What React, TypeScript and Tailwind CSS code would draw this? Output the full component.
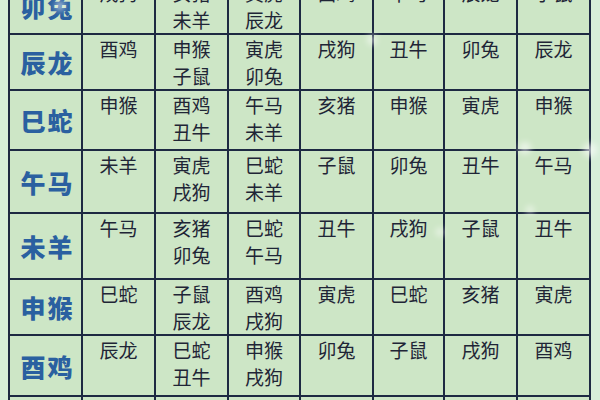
import React from "react";

type Row = {
  name: string;
  h: number;
  cells: string[][];
};

const rows: Row[] = [
  {
    name: "卯兔",
    h: 56,
    cells: [["戌狗"], ["亥猪", "未羊"], ["寅虎", "辰龙"], ["酉鸡"], ["午马"], ["辰龙"], ["子鼠"]],
  },
  {
    name: "辰龙",
    h: 55,
    cells: [["酉鸡"], ["申猴", "子鼠"], ["寅虎", "卯兔"], ["戌狗"], ["丑牛"], ["卯兔"], ["辰龙"]],
  },
  {
    name: "巳蛇",
    h: 60,
    cells: [["申猴"], ["酉鸡", "丑牛"], ["午马", "未羊"], ["亥猪"], ["申猴"], ["寅虎"], ["申猴"]],
  },
  {
    name: "午马",
    h: 63,
    cells: [["未羊"], ["寅虎", "戌狗"], ["巳蛇", "未羊"], ["子鼠"], ["卯兔"], ["丑牛"], ["午马"]],
  },
  {
    name: "未羊",
    h: 66,
    cells: [["午马"], ["亥猪", "卯兔"], ["巳蛇", "午马"], ["丑牛"], ["戌狗"], ["子鼠"], ["丑牛"]],
  },
  {
    name: "申猴",
    h: 56,
    cells: [["巳蛇"], ["子鼠", "辰龙"], ["酉鸡", "戌狗"], ["寅虎"], ["巳蛇"], ["亥猪"], ["寅虎"]],
  },
  {
    name: "酉鸡",
    h: 61,
    cells: [["辰龙"], ["巳蛇", "丑牛"], ["申猴", "戌狗"], ["卯兔"], ["子鼠"], ["戌狗"], ["酉鸡"]],
  },
  {
    name: "戌狗",
    h: 60,
    cells: [["卯兔"], ["寅虎", "午马"], ["申猴", "酉鸡"], ["辰龙"], ["未羊"], ["酉鸡"], ["未羊"]],
  },
];

const widths = [73, 73, 73, 72, 73, 71, 73, 73];

const sparkles = [
  { x: 372, y: 40, s: 10 },
  { x: 525, y: 148, s: 12 },
  { x: 590, y: 150, s: 14 },
  { x: 60, y: 6, s: 10 },
  { x: 530, y: 210, s: 8 },
  { x: 440, y: 232, s: 8 },
];

const App = () => {
  return (
    <div
      className="relative w-[600px] h-[400px] overflow-hidden bg-[#d6eed8]"
      style={{ fontFamily: '"Noto Sans CJK SC", "Noto Sans", sans-serif' }}
    >
      <div className="-mt-[23px] ml-[8px]">
        <table className="table-fixed border-collapse bg-[#cde6c6]">
          <colgroup>
            {widths.map((w, i) => (
              <col key={i} style={{ width: w }} />
            ))}
          </colgroup>
          <tbody>
            {rows.map((row) => (
              <tr key={row.name} style={{ height: row.h }}>
                {/* zodiac name column */}
                <td className="border-2 border-[#1d2942] text-center align-middle p-0 pt-1 pl-1">
                  <span className="text-[25px] font-black leading-none text-[#2a60a0] tracking-[2px]">
                    {row.name}
                  </span>
                </td>
                {row.cells.map((lines, i) => (
                  <td
                    key={i}
                    className="border-2 border-[#1d2942] text-center align-top p-0"
                  >
                    {lines.map((t, j) => (
                      <div key={j} className="text-[19px] leading-[27px] text-[#1f2536]">
                        {t}
                      </div>
                    ))}
                  </td>
                ))}
              </tr>
            ))}
          </tbody>
        </table>
      </div>

      {/* soft glints on the photo */}
      {sparkles.map((p, i) => (
        <div
          key={i}
          className="absolute rounded-full bg-white/60 blur-[3px]"
          style={{ left: p.x - p.s / 2, top: p.y - p.s / 2, width: p.s, height: p.s }}
        />
      ))}
    </div>
  );
};

export default App;
